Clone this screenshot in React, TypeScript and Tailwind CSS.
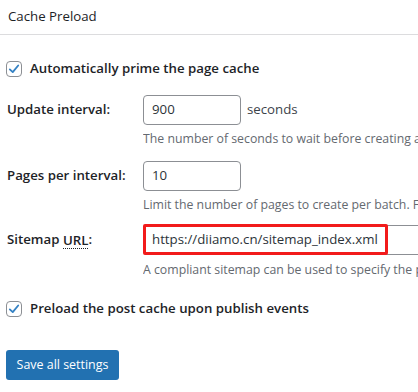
import React from "react";

const Check = () => (
  <span className="w-4 h-4 border border-[#8c8f94] rounded-[4px] bg-white flex items-center justify-center shrink-0">
    <svg width="14" height="14" viewBox="0 0 20 20">
      <path d="M4 10.5 L8.2 14.5 L16 5" fill="none" stroke="#3582c4" strokeWidth="2.6" strokeLinecap="round" strokeLinejoin="round" />
    </svg>
  </span>
);

export default function App() {
  const font = { fontFamily: '"Open Sans", "Noto Sans", sans-serif' };
  return (
    <div className="w-[418px] h-[392px] bg-white overflow-hidden text-[#1d2327]" style={font}>
      <div className="h-[34px] pl-2 pt-[6px] text-[13.25px] leading-5">Cache Preload</div>
      <div className="h-px bg-[#dcdcde]" />
      <div className="mt-[26px] flex items-center pl-[6px] h-4">
        <Check />
        <span className="ml-2 text-[13.25px] font-semibold whitespace-nowrap">Automatically prime the page cache</span>
      </div>

      <div className="mt-[18px] grid grid-cols-[136px_1fr] pl-[7px]">
        <div className="h-[30px] flex items-center text-[13.25px] font-semibold whitespace-nowrap">Update interval:</div>
        <div className="flex items-center whitespace-nowrap">
          <div className="w-[98px] h-[30px] border border-[#8c8f94] rounded-[4px] pl-2 flex items-center text-[13.25px] text-[#2c3338]">900</div>
          <span className="ml-[6px] text-[13.25px] text-[#3c434a]">seconds</span>
        </div>
        <div />
        <div className="mt-1 text-[12.3px] leading-5 text-[#646970] whitespace-nowrap overflow-hidden">The number of seconds to wait before creating a new batch</div>
      </div>

      <div className="mt-[12px] grid grid-cols-[136px_1fr] pl-[7px]">
        <div className="h-[30px] flex items-center text-[13.25px] font-semibold whitespace-nowrap">Pages per interval:</div>
        <div className="flex items-center">
          <div className="w-[98px] h-[30px] border border-[#8c8f94] rounded-[4px] pl-2 flex items-center text-[13.25px] text-[#2c3338]">10</div>
        </div>
        <div />
        <div className="mt-1 text-[12.3px] leading-5 text-[#646970] whitespace-nowrap overflow-hidden">Limit the number of pages to create per batch. Fewer</div>
      </div>

      <div className="mt-[10px] grid grid-cols-[136px_1fr] pl-[7px]">
        <div className="h-[30px] flex items-center text-[13.25px] font-semibold whitespace-nowrap">
          Sitemap&nbsp;<abbr className="no-underline border-b border-dotted border-[#1d2327] leading-[16px]">URL</abbr>:
        </div>
        <div className="relative overflow-visible">
          <div className="w-[400px] h-[30px] border border-[#8c8f94] rounded-[4px] pl-2 flex items-center text-[13.25px] text-[#2c3338] whitespace-nowrap">https://diiamo.cn/sitemap_index.xml</div>
          <div className="absolute left-0 top-[-1px] w-[245px] h-[31px] border-[3px] border-[#f21b1b] rounded-[2px]" />
        </div>
        <div />
        <div className="mt-[5px] text-[12.3px] leading-5 text-[#646970] whitespace-nowrap overflow-hidden">A compliant sitemap can be used to specify the pages</div>
      </div>

      <div className="mt-[21px] flex items-center pl-[6px] h-4">
        <Check />
        <span className="ml-2 text-[13.25px] font-semibold whitespace-nowrap">Preload the post cache upon publish events</span>
      </div>

      <button className="mt-[33px] ml-[6px] w-[113px] h-[30px] rounded-[3px] bg-[#2271b1] text-white text-[12.45px] flex items-center justify-center">
        Save all settings
      </button>
    </div>
  );
}
